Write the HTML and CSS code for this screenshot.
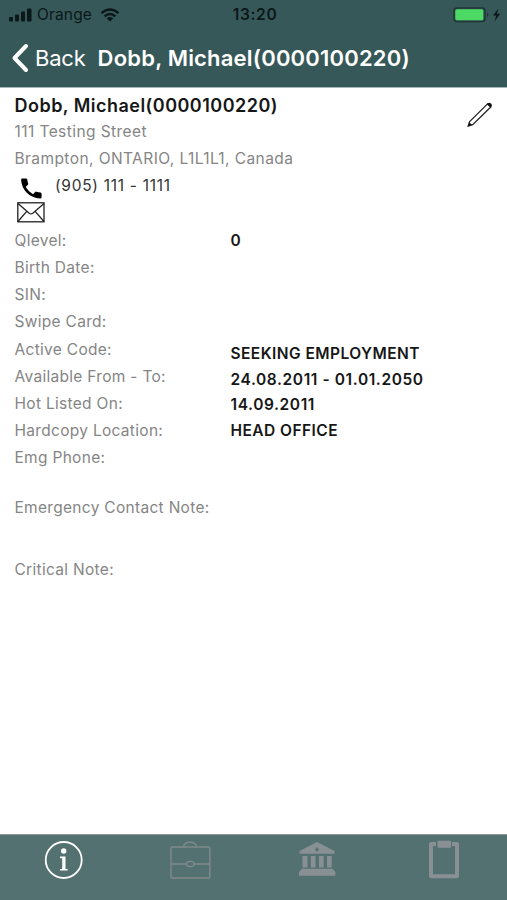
FILE: index.html
```html
<!DOCTYPE html>
<html lang="en">
<head>
<meta charset="UTF-8" />
<meta name="viewport" content="width=device-width, initial-scale=1" />
<title>Employee Details</title>
<link rel="stylesheet" href="styles.css">
</head>
<body>
  <header class="header">
    <div class="status-bar">
      <div class="carrier">
        <svg class="signal" width="23" height="14" viewBox="0 0 23 14">
          <rect x="0" y="9" width="4" height="4.5" rx="1" />
          <rect x="6" y="6.5" width="4" height="7" rx="1" />
          <rect x="12" y="3.5" width="4" height="10" rx="1" />
          <rect x="18" y="0.5" width="4.5" height="13" rx="1" />
        </svg>
        <span class="carrier-name">Orange</span>
        <svg class="wifi" width="20" height="14" viewBox="0 0 20 14">
          <path d="M1.5 5.2 Q10 -2.2 18.5 5.2" />
          <path d="M4.6 8.4 Q10 3.6 15.4 8.4" />
          <path class="wifi-dot" d="M10 13.5 L6.8 10.4 Q10 7.8 13.2 10.4 Z" />
        </svg>
      </div>
      <span class="clock">13:20</span>
      <svg class="battery" width="48" height="16" viewBox="0 0 48 16">
        <rect class="battery-case" x="1" y="1" width="31" height="13.5" rx="3" />
        <rect class="battery-level" x="2.3" y="2.2" width="28" height="11" rx="1.5" />
        <path class="battery-tip" d="M34 5.5 Q37 7.8 34 10 Z" />
        <path d="M45.5 1.5 L40 8.6 H43.2 L41.6 14.2 L47.2 6.8 H43.8 Z" />
      </svg>
    </div>
    <nav class="nav-bar">
      <a class="back" href="#">
        <svg width="18" height="30" viewBox="0 0 18 30">
          <path d="M15 3 L3.5 15 L15 27" />
        </svg>
        <span>Back</span>
      </a>
      <h1 class="title">Dobb, Michael(0000100220)</h1>
    </nav>
  </header>

  <main class="content">
    <section class="person">
      <div class="person-info">
        <h2 class="name">Dobb, Michael(0000100220)</h2>
        <p class="street">111 Testing Street</p>
        <p class="city">Brampton, ONTARIO, L1L1L1, Canada</p>
        <div class="phone">
          <svg width="21" height="21" viewBox="0 0 21 21">
            <path d="M1.2 0.5 H5 Q6.1 0.5 6.3 1.7 Q6.5 4 7.2 5.6 Q7.3 6.3 6.9 6.8 L4.7 9.1 Q7.4 13.8 12 16.2 L14.2 13.9 Q14.8 13.4 15.5 13.7 Q17.5 14.4 19.6 14.5 Q20.6 14.7 20.6 15.7 V19.2 Q20.5 20.4 19.3 20.4 Q11 20.1 5.8 14.7 Q0.4 9.2 0.1 1.7 Q0.1 0.6 1.2 0.5 Z" />
          </svg>
          <span>(905) 111 - 1111</span>
        </div>
        <svg class="mail" width="28" height="21" viewBox="0 0 28 21">
          <rect x="0.8" y="0.8" width="26.2" height="19" />
          <path d="M1 1.5 L12.2 11.2 Q14 12.5 15.8 11.2 L27 1.5 M1 19.5 L9.7 9.4 M27 19.5 L18.1 9.4" />
        </svg>
      </div>
      <svg class="edit" width="27" height="27" viewBox="0 0 27 27">
        <path d="M3.6 20.6 L21.6 2.8 L24.8 5.9 L6.7 23.6 L2.2 25 Z" />
        <path class="edit-fill" d="M20.8 3.2 Q22.6 0.6 25 2.4 Q27 4.2 24.6 6.6 Z M3.4 21.4 L6 23.8 L1.8 25.4 Z" />
      </svg>
    </section>

    <section class="details">
      <ul class="labels">
        <li>Qlevel:</li>
        <li>Birth Date:</li>
        <li>SIN:</li>
        <li>Swipe Card:</li>
        <li>Active Code:</li>
        <li>Available From - To:</li>
        <li>Hot Listed On:</li>
        <li>Hardcopy Location:</li>
        <li>Emg Phone:</li>
      </ul>
      <ul class="values">
        <li class="level">0</li>
        <li>SEEKING EMPLOYMENT</li>
        <li class="dates">24.08.2011 - 01.01.2050</li>
        <li class="dates">14.09.2011</li>
        <li>HEAD OFFICE</li>
      </ul>
    </section>

    <section class="notes">
      <p>Emergency Contact Note:</p>
      <p>Critical Note:</p>
    </section>
  </main>

  <footer class="tab-bar">
    <a class="tab active" href="#">
      <svg width="40" height="40" viewBox="0 0 40 40">
        <circle cx="20.7" cy="20" r="18" />
        <circle class="solid" cx="20.7" cy="11" r="2.7" />
        <path class="solid" d="M17 16.5 H22.5 V28.9 H24.6 V30.6 H17 V28.9 H19.2 V18.2 H17 Z" />
      </svg>
    </a>
    <a class="tab" href="#">
      <svg width="42" height="40" viewBox="0 0 42 40">
        <rect x="2" y="7" width="38.8" height="31" rx="1" />
        <path d="M14.5 6.5 Q15.5 2.2 21 2.2 Q26.5 2.2 27.5 6.5 M2 24 H17.3 M25 24 H40.5" />
        <ellipse cx="21.2" cy="24" rx="3.8" ry="2.6" />
      </svg>
    </a>
    <a class="tab" href="#">
      <svg width="38" height="40" viewBox="0 0 38 40">
        <path class="solid" fill-rule="evenodd" d="M19 2 L36.5 11 V13.8 H1.5 V11 Z M19 7 L17 9.5 L19 12 L21 9.5 Z" />
        <path class="solid" d="M4.5 16 H9.5 V27.5 H4.5 Z M12.8 16 H17.5 V27.5 H12.8 Z M21 16 H25.7 V27.5 H21 Z M29 16 H33.7 V27.5 H29 Z M4 28.8 H34.5 L37.3 32 V35.8 H1 V32 Z" />
      </svg>
    </a>
    <a class="tab" href="#">
      <svg width="32" height="40" viewBox="0 0 32 40">
        <path class="board" d="M8 4 H3 V36.2 H29 V4 H24" />
        <rect class="solid" x="9.5" y="0.8" width="13.5" height="7" rx="1" />
      </svg>
    </a>
  </footer>
</body>
</html>
```
FILE: styles.css
```css
* {
  box-sizing: border-box;
}
body {
  margin: 0;
  height: 100vh;
  display: flex;
  flex-direction: column;
  font-family: Inter, "Liberation Sans", sans-serif;
  background: #fff;
  color: #161616;
  overflow: hidden;
}
h1, h2, p, ul {
  margin: 0;
  padding: 0;
}
ul {
  list-style: none;
}
svg {
  display: block;
  flex: none;
}
a {
  color: inherit;
  text-decoration: none;
}
.header {
  height: 88px;
  background: #365859;
  border-bottom: 1px solid #a5bab9;
}
.status-bar {
  height: 29px;
  padding: 0 6px 0 9px;
  display: grid;
  grid-template-columns: 1fr auto 1fr;
  align-items: center;
  color: #0b1718;
  fill: #0b1718;
}
.carrier {
  display: flex;
  align-items: center;
}
.carrier-name {
  margin: 0 8px 0 5px;
  font-size: 15.5px;
  letter-spacing: 0.15px;
}
.wifi {
  fill: none;
  stroke: #0b1718;
  stroke-width: 2.4;
}
.wifi-dot {
  fill: #0b1718;
  stroke: none;
}
.clock {
  font-size: 15.5px;
  font-weight: 600;
  letter-spacing: 0.7px;
}
.battery {
  justify-self: end;
}
.battery-case {
  fill: none;
  stroke: #1f3536;
  stroke-width: 1.5;
}
.battery-level {
  fill: #4cd964;
}
.battery-tip {
  fill: #1f3536;
}
.nav-bar {
  height: 57px;
  padding-left: 11px;
  display: flex;
  align-items: center;
  color: #fff;
}
.back {
  display: flex;
  align-items: center;
  gap: 6px;
  font-size: 22px;
  letter-spacing: -0.2px;
}
.back svg {
  fill: none;
  stroke: #fff;
  stroke-width: 4;
  stroke-linecap: round;
  stroke-linejoin: round;
}
.title {
  margin-left: 12px;
  font-size: 22px;
  font-weight: 600;
  letter-spacing: 0.2px;
}
.content {
  flex: 1;
  padding-left: 14.5px;
}
.person {
  display: flex;
  justify-content: space-between;
  padding: 5px 14px 0 0;
}
.name {
  font-size: 18px;
  line-height: 26px;
  font-weight: 600;
  letter-spacing: 0.48px;
}
.street,
.city {
  font-size: 15.5px;
  line-height: 27px;
  letter-spacing: 0.42px;
  color: #858585;
}
.street {
  line-height: 26px;
}
.phone {
  display: flex;
  gap: 13.5px;
  height: 27px;
  padding-left: 6px;
  font-size: 15.5px;
  line-height: 27px;
  letter-spacing: 0.7px;
  color: #333;
}
.phone svg {
  margin-top: 6px;
  fill: #000;
}
.mail {
  margin: 3px 0 0 2.5px;
  fill: none;
  stroke: #222;
  stroke-width: 1.3;
}
.edit {
  margin-top: 8px;
  fill: none;
  stroke: #222;
  stroke-width: 1.3;
}
.edit .edit-fill {
  fill: #111;
  stroke: none;
}
.details {
  display: grid;
  grid-template-columns: 216px 1fr;
  margin-top: 4px;
  font-size: 15.5px;
}
.labels,
.notes {
  color: #858585;
  letter-spacing: 0.3px;
}
.labels li {
  line-height: 27.15px;
}
.values {
  font-weight: 600;
  letter-spacing: 0.45px;
}
.values li {
  line-height: 25.7px;
}
.values .level {
  height: 114px;
  line-height: 27px;
}
.values .dates {
  letter-spacing: 0.6px;
}
.notes {
  font-size: 15.5px;
}
.notes p {
  margin-top: 23px;
  line-height: 27px;
}
.notes p + p {
  margin-top: 35px;
}
.tab-bar {
  height: 66px;
  padding-top: 5px;
  display: grid;
  grid-template-columns: repeat(4, 1fr);
  justify-items: center;
  background: #547172;
  border-top: 1px solid #8b9796;
}
.tab svg {
  fill: none;
  stroke: #80898c;
  stroke-width: 1.4;
}
.tab .solid {
  fill: #899094;
  stroke: none;
}
.tab .board {
  stroke: #899094;
  stroke-width: 4;
  stroke-linejoin: round;
}
.tab.active svg {
  stroke: #fff;
  stroke-width: 1.8;
}
.tab.active .solid {
  fill: #fff;
}
```
